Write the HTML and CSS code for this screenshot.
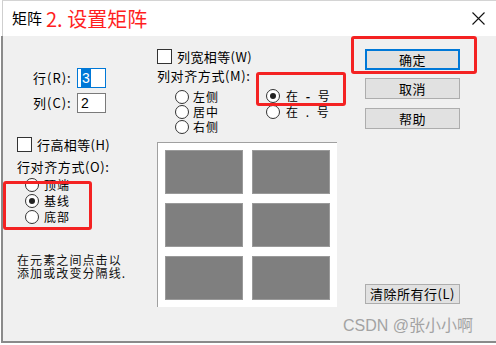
FILE: index.html
```html
<!DOCTYPE html>
<html lang="zh-CN">
<head>
<meta charset="utf-8">
<title>矩阵</title>
<link rel="stylesheet" href="styles.css">
</head>
<body>
<div class="window">
  <div class="titlebar">
    <span class="title">矩阵</span>
    <span class="annot-title">2. 设置矩阵</span>
    <svg class="close" viewBox="0 0 13 13" aria-hidden="true"><path d="M0.5 0.5L12.5 12.5M12.5 0.5L0.5 12.5" stroke="#111" stroke-width="1.1" fill="none"/></svg>
  </div>
  <div class="body">
    <div class="col-left">
      <div class="field"><span class="field-label">行(R):</span><span class="input focused"><span class="sel">3</span></span></div>
      <div class="field"><span class="field-label">列(C):</span><span class="input">2</span></div>
      <div class="check row-check"><span class="box"></span><span class="label">行高相等(H)</span></div>
      <div class="group-label">行对齐方式(O):</div>
      <div class="radios-left">
        <div class="radio"><span class="circle"></span>顶端</div>
        <div class="radio"><span class="circle on"></span>基线</div>
        <div class="radio"><span class="circle"></span>底部</div>
      </div>
      <p class="hint">在元素之间点击以<br>添加或改变分隔线.</p>
    </div>
    <div class="col-mid">
      <div class="check"><span class="box"></span><span class="label">列宽相等(W)</span></div>
      <div class="group-label">列对齐方式(M):</div>
      <div class="radio-row">
        <div class="group-a">
          <div class="radio"><span class="circle"></span>左侧</div>
          <div class="radio"><span class="circle"></span>居中</div>
          <div class="radio"><span class="circle"></span>右侧</div>
        </div>
        <div class="group-b">
          <div class="radio"><span class="circle on"></span><span class="sym">在 <b class="dash">-</b> 号</span></div>
          <div class="radio"><span class="circle"></span><span class="sym">在 . 号</span></div>
        </div>
      </div>
      <div class="preview">
        <div class="cell"></div><div class="cell"></div>
        <div class="cell"></div><div class="cell"></div>
        <div class="cell"></div><div class="cell"></div>
      </div>
    </div>
    <div class="col-right">
      <div class="btn default">确定</div>
      <div class="btn">取消</div>
      <div class="btn btn-help">帮助</div>
      <div class="btn btn-clear">清除所有行(L)</div>
    </div>
  </div>
  <div class="mark mark-ok"></div>
  <div class="mark mark-col"></div>
  <div class="mark mark-row"></div>
  <div class="watermark">CSDN @张小小啊</div>
</div>
</body>
</html>
```
FILE: styles.css
```css
* { box-sizing: border-box; margin: 0; padding: 0; }
html, body { background: #fff; }
body {
  width: 496px;
  height: 345px;
  overflow: hidden;
  font-family: "Noto Sans CJK SC", "Noto Sans", sans-serif;
  font-size: 13px;
  color: #000;
}
.window { position: relative; height: 343px; }

.titlebar {
  height: 36px;
  margin-left: 2px;
  border-top: 1px solid #d4d4d4;
  border-left: 1px solid #cfcfcf;
  background: #fff;
  display: flex;
  align-items: center;
  padding-left: 9px;
}
.title { font-size: 15px; line-height: 15px; margin-top: -2px; }
.annot-title { font-size: 20px; line-height: 22px; color: #ff1f1f; margin-left: 4px; margin-top: 1px; }
.close { margin-left: auto; margin-right: 11px; width: 13px; height: 13px; }

.body {
  margin-left: 1px;
  height: 307px;
  border-left: 2px solid #8a8a8a;
  border-bottom: 2px solid #8a8a8a;
  background: #f0f0f0;
  display: flex;
  padding-left: 14px;
}

.col-left { width: 140px; padding-top: 32px; }
.field { display: flex; align-items: center; height: 20px; margin-bottom: 5px; }
.field-label { width: 60px; padding-left: 16px; letter-spacing: 1px; line-height: 14px; }
.input {
  width: 29px;
  height: 20px;
  border: 1px solid #7a7a7a;
  background: #fff;
  padding-left: 3px;
  font-family: "Liberation Sans", sans-serif;
  font-size: 14px;
  line-height: 18px;
}
.input.focused { border-color: #0078d7; }
.sel { background: #0078d7; color: #fff; padding: 1px 1px; }

.check { display: flex; align-items: center; height: 15px; line-height: 15px; }
.box { width: 15px; height: 15px; border: 1px solid #333; background: #fff; margin-right: 5px; flex: none; }
.check .label { letter-spacing: 0.4px; }
.row-check { margin-top: 24px; }
.group-label { line-height: 14px; height: 14px; margin-top: 8px; letter-spacing: 0.6px; }

.radio { display: flex; align-items: center; height: 16px; line-height: 14px; font-size: 12px; letter-spacing: 1px; }
.circle {
  width: 14px;
  height: 14px;
  border: 1px solid #333;
  border-radius: 50%;
  background: #fff;
  display: flex;
  align-items: center;
  justify-content: center;
  margin-right: 5px;
  flex: none;
}
.circle.on::after { content: ""; width: 6px; height: 6px; border-radius: 50%; background: #222; }
.radios-left { margin-top: 3px; }
.radios-left .radio { padding-left: 8px; }
.hint { margin-top: 28px; line-height: 13px; font-size: 12px; letter-spacing: 1.1px; color: #111; }

.col-mid { width: 180px; padding-top: 13px; }
.col-mid .group-label { margin-top: 5px; }
.radio-row { display: flex; margin-top: 6px; }
.group-a { width: 109px; padding-left: 18px; }
.group-a .radio { height: 15px; }
.group-a .circle { margin-right: 4px; }
.group-b { margin-top: -1px; }
.group-b .circle { margin-right: 6px; }
.sym { word-spacing: 4px; letter-spacing: 0.5px; }
.dash { font-weight: bold; }

.preview {
  margin-top: 8px;
  width: 180px;
  height: 165px;
  background: #fff;
  border-top: 1px solid #a0a0a0;
  border-left: 1px solid #a0a0a0;
  padding: 7px;
  display: grid;
  grid-template-columns: 78px 78px;
  grid-template-rows: 44px 44px 44px;
  gap: 9px;
}
.cell { background: #7f7f7f; border: 1px solid #9a9a9a; }

.col-right { width: 95px; margin-left: 28px; padding-top: 13px; display: flex; flex-direction: column; }
.btn {
  height: 21px;
  background: #e1e1e1;
  border: 1px solid #adadad;
  display: flex;
  align-items: center;
  justify-content: center;
  line-height: 14px;
  letter-spacing: 0.5px;
}
.btn.default { border: 2px solid #0078d7; }
.btn + .btn { margin-top: 8px; }
.btn.btn-help { margin-top: 9px; }
.btn.btn-clear { margin-top: 155px; height: 20px; }

.mark { position: absolute; border: 3px solid #f42222; border-radius: 3px; }
.mark-ok { left: 351px; top: 36px; width: 126px; height: 38px; }
.mark-col { left: 256px; top: 72px; width: 90px; height: 34px; }
.mark-row { left: 3px; top: 181px; width: 89px; height: 49px; }

.watermark {
  position: absolute;
  left: 343px;
  top: 316px;
  font-family: "Liberation Sans", "Noto Sans CJK SC", sans-serif;
  font-size: 16px;
  line-height: 20px;
  color: #a3a3a3;
}
```
